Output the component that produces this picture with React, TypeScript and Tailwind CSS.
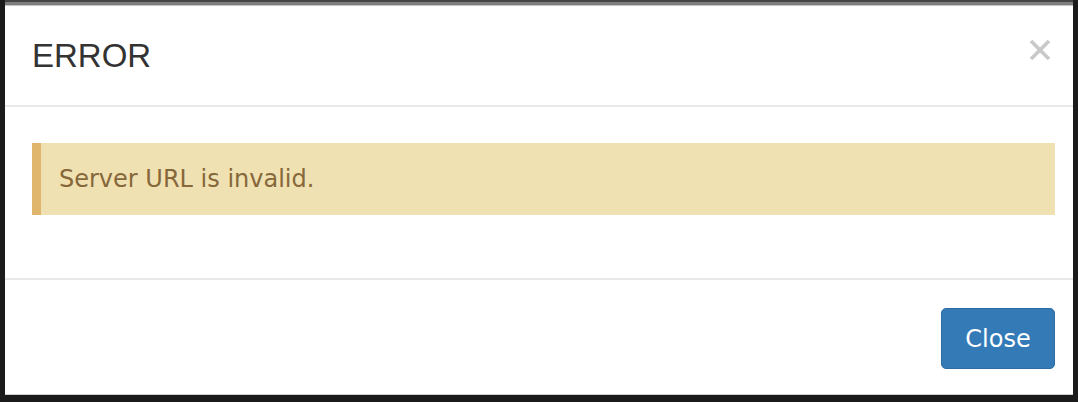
import React from "react";

export default function App() {
  return (
    <div className="w-[1078px] h-[402px] bg-[#1b1b1b] flex px-[5px] overflow-hidden">
      <div className="flex-1 flex flex-col">
        <div className="h-[2px] bg-[#454545]" />
        <div className="h-[3px] bg-[#7d7d7d]" />
        <div className="h-[1px] bg-[#c4c4c4]" />
        <div className="bg-white flex flex-col">
          <div className="h-[99px] flex items-center justify-between pl-[27px] pr-[22px]">
            <h4
              className="text-[33px] leading-none text-[#333333] m-0 mb-[1px]"
              style={{ fontFamily: '"Liberation Sans", Arial, sans-serif' }}
            >
              ERROR
            </h4>
            <svg width="22" height="22" viewBox="0 0 22 22" className="mb-[12px]">
              <path d="M2 2 L20 20 M20 2 L2 20" stroke="#c9c9c9" strokeWidth="3.6" strokeLinecap="butt" />
            </svg>
          </div>
          <div className="h-[2px] bg-[#e8e8e8]" />
          <div className="h-[171px] pl-[27px] pr-[18px] pt-[36px]">
            <div className="h-[72px] flex items-center bg-[#f0e1b2] border-l-[9px] border-[#e0b66c] pl-[18px]">
              <span
                className="text-[24px] text-[#86683a] leading-none"
                style={{ fontFamily: '"DejaVu Sans", Verdana, sans-serif' }}
              >
                Server URL is invalid.
              </span>
            </div>
          </div>
          <div className="h-[2px] bg-[#e8e8e8]" />
          <div className="h-[114px] flex justify-end items-start pt-[28px] pr-[18px]">
            <button
              className="w-[114px] h-[61px] bg-[#337ab7] border border-[#2e6da4] rounded-[5px] text-white text-[24px] leading-none flex items-center justify-center"
              style={{ fontFamily: '"DejaVu Sans", Verdana, sans-serif' }}
            >
              Close
            </button>
          </div>
        </div>
        <div className="h-[1px] bg-[#cfcfcf]" />
      </div>
    </div>
  );
}
